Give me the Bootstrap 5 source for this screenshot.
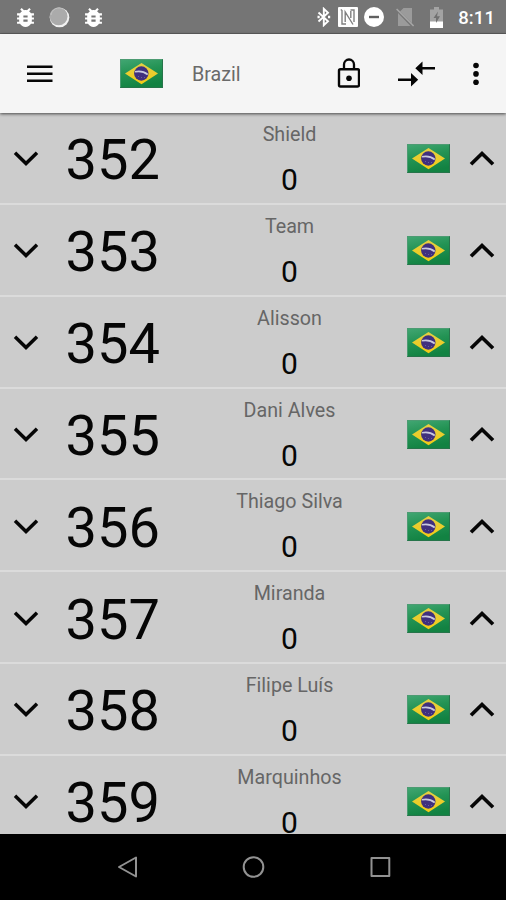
<!DOCTYPE html>
<html lang="en">
<head>
<meta charset="utf-8">
<meta name="viewport" content="width=device-width, initial-scale=1">
<title>Brazil</title>
<link href="https://cdn.jsdelivr.net/npm/bootstrap@5.3.0/dist/css/bootstrap.min.css" rel="stylesheet">
<style>
  body { font-family: Roboto, "Liberation Sans", sans-serif; background: #000; }
  svg { display: block; flex: none; }
  .screen { width: 506px; height: 900px; }
  .status-bar { height: 34px; background: #757575; color: #fff; padding: 1px 11px 0 16px; border-bottom: 1px solid #606060; }
  .status-left { gap: 14px; }
  .clock { font-size: 18.5px; font-weight: 500; line-height: 34px; padding-top: 2px; margin-left: 15px; letter-spacing: .1px; }
  .app-bar { height: 79px; background: #f5f5f5; box-shadow: 0 1px 3px rgba(0,0,0,.65); z-index: 1; padding: 0 20px 0 24px; }
  .app-title { font-size: 19.7px; color: #6a6a6a; margin-left: 29px; line-height: 28px; padding-top: 3px; }
  .icon-nfc { margin-left: 7px; }
  .icon-dnd { margin-left: 6px; }
  .icon-sim { margin-left: 12px; }
  .icon-battery { margin-left: 15px; }
  .bar-flag { margin-left: 64px; }
  .icon-swap { margin-left: 37px; }
  .icon-more { margin-left: 31px; }
  .sticker-list { height: 721px; background: #ccc; }
  .sticker { height: 91.85px; border-bottom: 2px solid #dbdbdb; flex: none; }
  .step { width: 52px; padding-top: 2px; }
  .step-up { width: 49px; padding-top: 2px; }
  .num { width: 123px; padding-left: 13.5px; font-size: 56px; line-height: 84px; color: #060606; padding-top: 5px; }
  .who { width: 229px; padding-top: 8px; }
  .who-name { font-size: 19.7px; line-height: 28px; color: #666; }
  .who-count { font-size: 30px; line-height: 36px; color: #060606; margin-top: 13px; }
  .flag-cell { width: 53px; padding: 2px 0 0 2.5px; }
  .nav-keys { height: 66px; background: #000; }
</style>
<script src="https://cdn.jsdelivr.net/npm/bootstrap@5.3.0/dist/js/bootstrap.bundle.min.js"></script>
</head>
<body>
<svg width="0" height="0" class="position-absolute" aria-hidden="true">
  <defs>
    <linearGradient id="green" x1="0" y1="0" x2="0.3" y2="1"><stop offset="0" stop-color="#43a774"/><stop offset=".5" stop-color="#239354"/><stop offset="1" stop-color="#128242"/></linearGradient>
    <linearGradient id="gold" x1="0" y1="0" x2="0" y2="1"><stop offset="0" stop-color="#e4cf45"/><stop offset="1" stop-color="#f2cb14"/></linearGradient>
    <symbol id="flag" viewBox="0 0 43 29">
      <rect width="43" height="29" fill="url(#green)"/>
      <path d="M.5 28.5V.5h42" fill="none" stroke="#4c9b72" stroke-width="1"/>
      <path d="M42.5.5v28H.5" fill="none" stroke="#26744a" stroke-width="1"/>
      <path d="M5 14.5 21.5 4 38 14.5 21.5 25.3z" fill="url(#gold)"/>
      <circle cx="21.3" cy="14.5" r="7.200" fill="#40307e"/>
      <path d="M15 12.800c4.500-1 9.300 0 12.700 2.700" fill="none" stroke="#c9c8df" stroke-width="1.600"/>
      <path d="M18 17.500h1m2 1h1m2 0h1" stroke="#6a5d9c"/>
    </symbol>
    <symbol id="bug" viewBox="4 3 16 18"><path fill="#fff" d="M20 8h-2.810c-.45-.78-1.070-1.450-1.820-1.960L17 4.410 15.590 3l-2.170 2.170C12.960 5.060 12.490 5 12 5s-.96.060-1.410.170L8.410 3 7 4.410l1.620 1.630C7.880 6.550 7.260 7.220 6.810 8H4v2h2.090c-.05.33-.09.66-.09 1v1H4v2h2v1c0 .34.040.67.090 1H4v2h2.810c1.040 1.790 2.970 3 5.190 3s4.150-1.210 5.190-3H20v-2h-2.090c.05-.33.09-.66.09-1v-1h2v-2h-2v-1c0-.34-.04-.67-.09-1H20V8zm-6 8h-4v-2h4v2zm0-4h-4v-2h4v2z"/></symbol>
    <symbol id="down" viewBox="0 0 26 17"><path d="m2 2.700 11 10.800L24 2.700" fill="none" stroke="#060606" stroke-width="3.500"/></symbol>
    <symbol id="up" viewBox="0 0 26 17"><path d="m2 14.300 11-10.800 11 10.800" fill="none" stroke="#060606" stroke-width="3.700"/></symbol>
  </defs>
</svg>

<div class="screen d-flex flex-column overflow-hidden">
  <header class="status-bar d-flex align-items-center justify-content-between flex-shrink-0">
    <div class="status-left d-flex align-items-center">
      <svg width="19" height="19"><use href="#bug"/></svg>
      <svg width="21" height="21" viewBox="0 0 21 21"><circle cx="10.500" cy="10.500" r="9.800" fill="#f1f1f1"/><circle cx="9.600" cy="9.400" r="8.900" fill="#ababab"/><path d="M2 8A8 8 0 0 1 14 2" fill="none" stroke="#c2c2c2"/></svg>
      <svg width="19" height="19"><use href="#bug"/></svg>
    </div>
    <div class="d-flex align-items-center">
      <svg width="14" height="20" viewBox="0 0 14 20"><path d="m1.500 5.500 9.500 8.700-4.200 4V1.800l4.200 4-9.500 8.700" fill="none" stroke="#fff" stroke-width="1.900"/><path d="M.5 8.800h2.200v2.400H.5zm10.500 0h2.200v2.400H11z" fill="#fff"/></svg>
      <svg class="icon-nfc" width="20" height="20" viewBox="0 0 20 20"><rect width="20" height="20" rx="1" fill="#fff"/><path d="M8 17H4V3.500L2.800 2.500M7.200 15V5L15 17.500M12.500 3H16v12M12.800 4v7" fill="none" stroke="#808080" stroke-width="1.400"/></svg>
      <svg class="icon-dnd" width="20" height="20" viewBox="0 0 20 20"><circle cx="10" cy="10" r="10" fill="#fff"/><path d="M5 10h10" stroke="#606060" stroke-width="2.400"/></svg>
      <svg class="icon-sim" width="19" height="20" viewBox="0 0 19 20"><path d="M7.500 1H16v15.300L4 4.500zM2 6 14.500 19H2z" fill="#9b9b9b"/><path d="m.6 2 17 17" stroke="#a7a7a7" stroke-width="1.500"/></svg>
      <svg class="icon-battery" width="13" height="21" viewBox="0 0 13 21"><path d="M0 2.500h4V0h5v2.500h4V15H0z" fill="#a3a3a3"/><path d="M0 14.500h13V21H0z" fill="#fff"/><path d="M8 4.500 3.500 11H6v5l4-6.800H7z" fill="#707070"/></svg>
      <span class="clock">8:11</span>
    </div>
  </header>

  <nav class="app-bar d-flex align-items-center position-relative flex-shrink-0">
    <svg width="32" height="32" viewBox="0 0 32 32" role="img" aria-label="Menu"><path d="M3 8.800h25.500M3 15.800h25.500M3 22.800h25.500" stroke="#060606" stroke-width="2.400"/></svg>
    <svg class="bar-flag" width="43" height="29"><use href="#flag"/></svg>
    <span class="app-title">Brazil</span>
    <div class="d-flex align-items-center ms-auto">
      <svg width="24" height="32" viewBox="0 0 24 32"><rect x="3" y="11.300" width="20" height="17.200" rx="1.500" fill="none" stroke="#060606" stroke-width="2.400"/><path d="M8 11V6.500a5 5 0 0 1 10 0V11" fill="none" stroke="#060606" stroke-width="2.300"/><circle cx="13" cy="20.200" r="2.800" fill="#060606"/></svg>
      <svg class="icon-swap" width="38" height="28" viewBox="0 0 38 28"><path d="M1 19.700h14M25 8.300h13.300" stroke="#060606" stroke-width="2.600"/><path d="M14 13v13.400l7.200-6.700zM25.500 1.600V15l-7.200-6.700z" fill="#060606"/></svg>
      <svg class="icon-more" width="20" height="28" viewBox="0 0 20 28"><g fill="#060606"><circle cx="10" cy="5.500" r="2.800"/><circle cx="10" cy="13.900" r="2.800"/><circle cx="10" cy="22.300" r="2.800"/></g></svg>
    </div>
  </nav>

  <main class="sticker-list d-flex flex-column overflow-hidden flex-shrink-0" id="stickers"></main>

  <footer class="nav-keys d-flex justify-content-center align-items-center flex-shrink-0">
    <svg width="506" height="66" viewBox="0 0 506 66"><g fill="none" stroke="#929292" stroke-width="2" stroke-linejoin="round"><path d="M119 33 136 23.500v19z"/><circle cx="253.500" cy="33" r="9.800"/><rect x="371.500" y="24" width="17.800" height="18"/></g></svg>
  </footer>
</div>

<script>
  const names = ["Shield", "Team", "Alisson", "Dani Alves", "Thiago Silva", "Miranda", "Filipe Luís", "Marquinhos"];
  document.getElementById("stickers").innerHTML = names.map((name, i) => `
    <div class="sticker d-flex align-items-center">
      <div class="step d-flex justify-content-center"><svg width="26" height="17"><use href="#down"/></svg></div>
      <div class="num">${352 + i}</div>
      <div class="who text-center align-self-start">
        <div class="who-name">${name}</div>
        <div class="who-count">0</div>
      </div>
      <div class="flag-cell"><svg width="43" height="29"><use href="#flag"/></svg></div>
      <div class="step-up d-flex justify-content-center"><svg width="26" height="17"><use href="#up"/></svg></div>
    </div>`).join("");
</script>
</body>
</html>
